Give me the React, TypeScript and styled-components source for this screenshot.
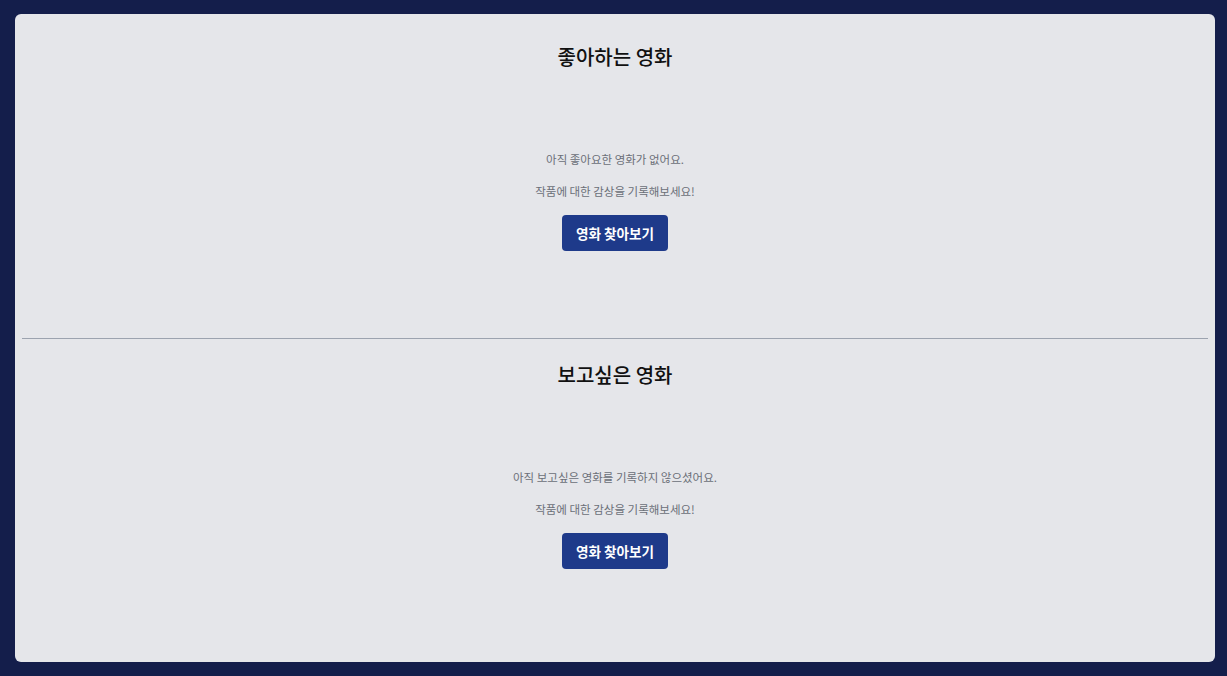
import React from "react";
import styled, { createGlobalStyle } from "styled-components";

const GlobalStyle = createGlobalStyle`
	html, body {
		margin: 0;
		padding: 0;
		background: #141e4b;
		font-family: "Noto Sans CJK KR", "Noto Sans", sans-serif;
	}
`;

const Page = styled.div`
	height: 676px;
	box-sizing: border-box;
	padding: 14px 12px 14px 15px;
	display: flex;
`;

const Panel = styled.main`
	flex: 1;
	display: flex;
	flex-direction: column;
	padding: 7px;
	background: #e5e6ea;
	border-radius: 6px;
`;

const Section = styled.section<{ $divider?: boolean }>`
	flex: 1;
	display: flex;
	flex-direction: column;
	align-items: center;
	padding-top: 22px;
	${(p) => p.$divider && "border-bottom: 1px solid #9ca3af;"}
`;

const Title = styled.h2`
	margin: 0;
	font-size: 20px;
	line-height: 28px;
	font-weight: 500;
	color: #111111;
`;

const Empty = styled.div`
	margin-top: 78px;
	display: flex;
	flex-direction: column;
	align-items: center;
	gap: 12px;
`;

const Message = styled.p`
	margin: 0;
	font-size: 11.5px;
	line-height: 20px;
	color: #6b6f78;
`;

const BrowseButton = styled.button`
	margin-top: 2px;
	height: 36px;
	padding: 0 14px;
	border: none;
	border-radius: 4px;
	background: #1e3a8a;
	color: #ffffff;
	font-family: inherit;
	font-size: 13.6px;
	font-weight: 700;
	cursor: pointer;
`;

const sections = [
	{ title: "좋아하는 영화", message: "아직 좋아요한 영화가 없어요." },
	{ title: "보고싶은 영화", message: "아직 보고싶은 영화를 기록하지 않으셨어요." },
];

export default function App() {
	return (
		<>
			<GlobalStyle />
			<Page>
				<Panel>
					{sections.map((s, i) => (
						<Section key={s.title} $divider={i === 0}>
							<Title>{s.title}</Title>
							<Empty>
								<Message>{s.message}</Message>
								<Message>작품에 대한 감상을 기록해보세요!</Message>
								<BrowseButton>영화 찾아보기</BrowseButton>
							</Empty>
						</Section>
					))}
				</Panel>
			</Page>
		</>
	);
}
